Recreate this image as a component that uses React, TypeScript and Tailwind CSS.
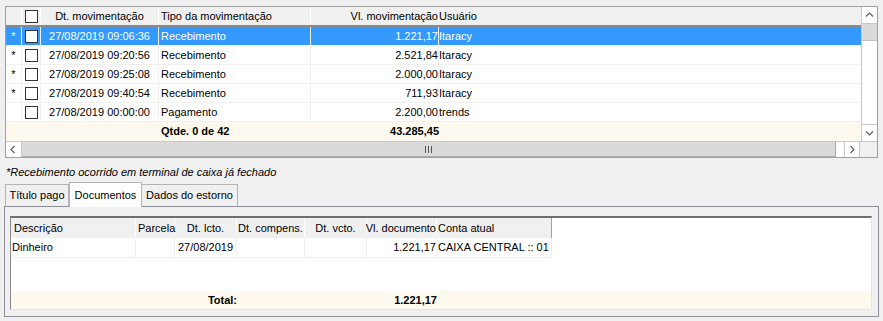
import React from 'react';

type Mov = { star: boolean; dt: string; tipo: string; vl: string; user: string; sel?: boolean };

const movs: Mov[] = [
  { star: true, dt: '27/08/2019 09:06:36', tipo: 'Recebimento', vl: '1.221,17', user: 'Itaracy', sel: true },
  { star: true, dt: '27/08/2019 09:20:56', tipo: 'Recebimento', vl: '2.521,84', user: 'Itaracy' },
  { star: true, dt: '27/08/2019 09:25:08', tipo: 'Recebimento', vl: '2.000,00', user: 'Itaracy' },
  { star: true, dt: '27/08/2019 09:40:54', tipo: 'Recebimento', vl: '711,93', user: 'Itaracy' },
  { star: false, dt: '27/08/2019 00:00:00', tipo: 'Pagamento', vl: '2.200,00', user: 'trends' },
];

const Check = () => <div className="w-[13px] h-[13px] border border-[#333333] bg-white" />;

const Chevron = ({ dir }: { dir: 'up' | 'down' | 'left' | 'right' }) => {
  const d = {
    up: 'M1 5.5 L4.5 2 L8 5.5',
    down: 'M1 2.5 L4.5 6 L8 2.5',
    left: 'M5.5 1 L2 4.5 L5.5 8',
    right: 'M2.5 1 L6 4.5 L2.5 8',
  }[dir];
  return (
    <svg width="9" height="9" viewBox="0 0 9 9">
      <path d={d} fill="none" stroke="#606060" strokeWidth="1.2" />
    </svg>
  );
};

function MovGrid() {
  return (
    <div className="ml-[5px] w-[873px] h-[152px] border border-[#a0a0a0] bg-white flex flex-col">
      <div className="flex h-[134px]">
        <div className="flex-1 flex flex-col">
          {/* header */}
          <div className="flex h-[20px] bg-[#f0f0f0] border-b-2 border-[#8a8a8a]">
            <div className="w-[16px] border-r border-white" />
            <div className="w-[19px] border-r border-white flex items-center justify-center">
              <Check />
            </div>
            <div className="w-[118px] border-r border-white flex items-center justify-center">Dt. movimentação</div>
            <div className="w-[152px] border-r border-white flex items-center pl-[2px]">Tipo da movimentação</div>
            <div className="w-[128px] border-r border-white flex items-center justify-end">Vl. movimentação</div>
            <div className="flex-1 flex items-center">Usuário</div>
          </div>
          {movs.map((m, i) => (
            <div
              key={i}
              className={`flex h-[19px] border-b border-[#f0f0f0] ${m.sel ? 'bg-[#3399ff] text-white' : 'bg-white'}`}
            >
              <div className="w-[16px] border-r border-[#f0f0f0] flex items-center justify-center">
                {m.star ? '*' : ''}
              </div>
              <div className="w-[19px] border-r border-[#f0f0f0] flex items-center justify-center">
                <Check />
              </div>
              <div className="w-[118px] border-r border-[#f0f0f0] flex items-center justify-center">{m.dt}</div>
              <div className="w-[152px] border-r border-[#f0f0f0] flex items-center pl-[2px]">{m.tipo}</div>
              <div className="w-[128px] border-r border-[#f0f0f0] flex items-center justify-end">{m.vl}</div>
              <div className="flex-1 flex items-center">{m.user}</div>
            </div>
          ))}
          <div className="flex flex-1 bg-[#fdf9ee] font-bold">
            <div className="w-[153px]" />
            <div className="w-[152px] flex items-center pl-[2px]">Qtde. 0 de 42</div>
            <div className="w-[128px] flex items-center justify-end">43.285,45</div>
            <div className="flex-1" />
          </div>
        </div>
        {/* vertical scrollbar */}
        <div className="w-[16px] flex flex-col border-l border-[#c8c8c8] bg-white">
          <div className="h-[17px] border-b border-[#c8c8c8] flex items-center justify-center">
            <Chevron dir="up" />
          </div>
          <div className="h-[17px] bg-[#dadada] border-b border-[#c0c0c0]" />
          <div className="flex-1" />
          <div className="h-[17px] border-t border-[#c8c8c8] flex items-center justify-center">
            <Chevron dir="down" />
          </div>
        </div>
      </div>
      {/* horizontal scrollbar */}
      <div className="flex h-[16px] border-t border-[#c8c8c8]">
        <div className="w-[16px] bg-white border-r border-[#c8c8c8] flex items-center justify-center">
          <Chevron dir="left" />
        </div>
        <div className="w-[814px] bg-[#dadada] border-r border-b border-[#a8a8a8] flex items-center justify-center">
          <div className="flex gap-[2px]">
            <div className="w-px h-[7px] bg-[#555]" />
            <div className="w-px h-[7px] bg-[#555]" />
            <div className="w-px h-[7px] bg-[#555]" />
          </div>
        </div>
        <div className="w-[8px] bg-white" />
        <div className="w-[16px] bg-white border-l border-r border-[#c8c8c8] flex items-center justify-center">
          <Chevron dir="right" />
        </div>
        <div className="flex-1 bg-[#f0f0f0]" />
      </div>
    </div>
  );
}

function DocGrid() {
  return (
    <div className="h-[94px] bg-white border-t-2 border-t-[#6e6e6e] border-l border-l-[#8a8a8a] border-r border-r-[#e3e3e3] border-b border-b-[#e3e3e3] flex flex-col">
      <div className="flex h-[20px]">
        <div className="flex w-[541px] bg-[#f0f0f0] border-r border-[#a0a0a0]">
          <div className="w-[125px] border-r border-white flex items-center pl-[3px]">Descrição</div>
          <div className="w-[39px] border-r border-white flex items-center pl-[2px]">Parcela</div>
          <div className="w-[62px] border-r border-white flex items-center justify-center">Dt. lcto.</div>
          <div className="w-[68px] border-r border-white flex items-center justify-center">Dt. compens.</div>
          <div className="w-[62px] border-r border-white flex items-center justify-center">Dt. vcto.</div>
          <div className="w-[70px] border-r border-white flex items-center justify-end">Vl. documento</div>
          <div className="flex-1 flex items-center pl-[1px]">Conta atual</div>
        </div>
      </div>
      <div className="flex h-[20px]">
        <div className="flex w-[541px] border-b border-r border-[#f0f0f0]">
          <div className="w-[125px] border-r border-[#f0f0f0] flex items-center pl-[1px]">Dinheiro</div>
          <div className="w-[39px] border-r border-[#f0f0f0]" />
          <div className="w-[62px] border-r border-[#f0f0f0] flex items-center justify-center">27/08/2019</div>
          <div className="w-[68px] border-r border-[#f0f0f0]" />
          <div className="w-[62px] border-r border-[#f0f0f0]" />
          <div className="w-[70px] border-r border-[#f0f0f0] flex items-center justify-end">1.221,17</div>
          <div className="flex-1 flex items-center pl-[1px]">CAIXA CENTRAL :: 01</div>
        </div>
      </div>
      <div className="flex-1" />
      <div className="flex h-[18px] bg-[#fdf9ee] font-bold">
        <div className="w-[226px] flex items-center justify-end">Total:</div>
        <div className="w-[200px] flex items-center justify-end">1.221,17</div>
      </div>
    </div>
  );
}

function Tabs() {
  return (
    <div>
      <div className="flex items-end h-[24px] ml-[5px]">
        <div className="w-[64px] h-[22px] border border-b-0 border-[#b4b4b4] bg-[#f0f0f0] flex items-center justify-center">
          Título pago
        </div>
        <div className="relative z-10 -mb-px w-[73px] h-[25px] border border-b-0 border-[#b4b4b4] bg-white flex items-start justify-center pt-[4px]">
          Documentos
        </div>
        <div className="w-[96px] h-[22px] border border-l-0 border-b-0 border-[#b4b4b4] bg-[#f0f0f0] flex items-center justify-center">
          Dados do estorno
        </div>
      </div>
      <div className="ml-[4px] w-[875px] h-[111px] border border-[#8f8f9a] bg-[#f0f0f0] pt-[9px] pl-[5px] pr-[6px] pb-[6px]">
        <DocGrid />
      </div>
    </div>
  );
}

export default function App() {
  return (
    <div className="w-[883px] h-[321px] overflow-hidden whitespace-nowrap bg-[#f0f0f0] pt-[6px] font-['Liberation_Sans',Arial,sans-serif] text-[11px] text-black">
      <MovGrid />
      <p className="italic ml-[6px] mt-[5px] h-[18px] leading-[18px]">*Recebimento ocorrido em terminal de caixa já fechado</p>
      <div className="mt-px">
        <Tabs />
      </div>
    </div>
  );
}
